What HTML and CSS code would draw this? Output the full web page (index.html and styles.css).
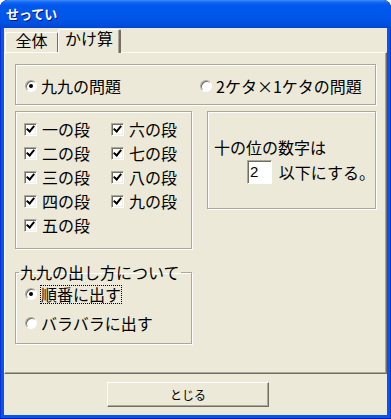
FILE: index.html
```html
<!DOCTYPE html>
<html lang="ja">
<head>
  <meta charset="UTF-8" />
  <title>せってい</title>
  <link rel="stylesheet" href="styles.css">
</head>
<body>
<div class="window">
  <div class="titlebar"><span class="title">せってい</span></div>
  <div class="client">
    <div class="tabs">
      <div class="tab">全体</div>
      <div class="tab active">かけ算</div>
    </div>

    <div class="panel">
      <div class="group mode">
        <div class="opt first"><span class="radio on"></span>九九の問題</div>
        <div class="opt"><span class="radio"></span>2ケタ×1ケタの問題</div>
      </div>

      <div class="row">
        <div class="group dans">
          <div class="chk"><span class="check"></span>一の段</div>
          <div class="chk"><span class="check"></span>二の段</div>
          <div class="chk"><span class="check"></span>三の段</div>
          <div class="chk"><span class="check"></span>四の段</div>
          <div class="chk"><span class="check"></span>五の段</div>
          <div class="chk"><span class="check"></span>六の段</div>
          <div class="chk"><span class="check"></span>七の段</div>
          <div class="chk"><span class="check"></span>八の段</div>
          <div class="chk"><span class="check"></span>九の段</div>
        </div>
        <div class="group tens">
          <div class="line">十の位の数字は</div>
          <div class="line2"><span class="field">2</span><span class="after">以下にする。</span></div>
        </div>
      </div>

      <fieldset class="order">
        <legend>九九の出し方について</legend>
        <div class="opt"><span class="radio on"></span><span class="focus">順番に出す</span></div>
        <div class="opt second"><span class="radio"></span>バラバラに出す</div>
      </fieldset>
    </div>

    <div class="footer"><button class="btn">とじる</button></div>
  </div>
</div>
</body>
</html>
```

FILE: styles.css
```css
body { margin: 0; background: #fff; font-family: "Noto Sans CJK JP", "Noto Sans", sans-serif; color: #000; }
.window { width: 391px; height: 419px; display: flex; flex-direction: column; background: #0855e6; border-radius: 8px 8px 0 0; box-shadow: inset 0 -1px #0019b8, inset 1px 0 #0831d9, inset -1px 0 #0831d9; overflow: hidden; }
.titlebar { height: 28px; flex: none; background: linear-gradient(#3d8ffc 0, #1a6af2 2px, #0058ee 5px, #0056e9 18px, #0050df 24px, #0046d2 28px); border-radius: 8px 8px 0 0; }
.title { display: block; padding-left: 6px; line-height: 28px; font-size: 13px; font-weight: bold; color: #fff; text-shadow: 1px 1px #0f1089; }
.client { flex: 1; margin: 0 4px 4px 4px; background: #ece9d8; display: flex; flex-direction: column; }

.tabs { height: 24px; flex: none; display: flex; align-items: flex-end; padding-left: 1px; }
.tab { box-sizing: border-box; width: 53px; height: 20px; border: 1px solid #fff; border-right-color: #716f64; border-bottom: none; border-radius: 2px 2px 0 0; font-size: 16px; line-height: 15px; text-align: center; }
.tab.active { width: 63px; height: 24px; margin-bottom: -1px; line-height: 16px; background: #ece9d8; border-right: 2px solid #716f64; box-shadow: inset -1px 0 #aca899; position: relative; z-index: 1; }

.panel { box-sizing: border-box; height: 322px; flex: none; border: 1px solid #fff; border-right-color: #716f64; border-bottom-color: #716f64; box-shadow: inset -1px -1px #aca899; padding: 11px 0 0 10px; font-size: 16px; }
.group { box-sizing: border-box; border: 1px solid #aca899; box-shadow: inset 1px 1px #fff, 1px 1px #fff; }

.opt { display: flex; align-items: center; height: 20px; line-height: 20px; white-space: nowrap; }
.radio { box-sizing: border-box; width: 12px; height: 12px; margin-right: 4px; border-radius: 50%; background: #fff; border: 1px solid; border-color: #aca899 #fff #fff #aca899; box-shadow: inset 1px 1px #716f64; position: relative; flex: none; }
.radio.on::after { content: ""; position: absolute; left: 3px; top: 3px; width: 4px; height: 4px; border-radius: 50%; background: #000; }

.mode { width: 361px; height: 41px; display: flex; align-items: center; padding: 2px 0 0 9px; }
.mode .first { width: 175px; }

.row { display: flex; gap: 15px; margin-top: 6px; }
.dans { width: 177px; height: 138px; padding: 7px 0 0 8px; display: grid; grid-template-columns: 87px auto; grid-template-rows: repeat(5, 20px); row-gap: 4px; grid-auto-flow: column; }
.chk { display: flex; align-items: center; line-height: 20px; white-space: nowrap; }
.check { box-sizing: border-box; width: 13px; height: 13px; margin-right: 5px; flex: none; background: #fff; border: 1px solid; border-color: #aca899 #fff #fff #aca899; box-shadow: inset 1px 1px #716f64, inset -1px -1px #f1efe2; position: relative; }
.check::after { content: ""; position: absolute; left: 3px; top: 0px; width: 3px; height: 6px; border-right: 2px solid #000; border-bottom: 2px solid #000; transform: rotate(40deg); }

.tens { width: 169px; height: 98px; padding: 25px 0 0 6px; }
.line { line-height: 20px; white-space: nowrap; }
.line2 { display: flex; align-items: center; margin-top: 3px; }
.field { box-sizing: border-box; width: 25px; height: 24px; margin-left: 33px; padding-left: 2px; background: #fff; border: 1px solid; border-color: #aca899 #fff #fff #aca899; box-shadow: inset 1px 1px #716f64; line-height: 21px; font-family: "Liberation Sans", sans-serif; font-size: 15px; }
.after { margin-left: 7px; white-space: nowrap; }

.order { box-sizing: border-box; width: 177px; margin: 14px 0 0 0; padding: 3px 0 10px 9px; border: 1px solid #aca899; box-shadow: inset 1px 1px #fff, 1px 1px #fff; min-width: 0; }
.order legend { padding: 0 1px; margin-left: -6px; line-height: 18px; font-size: 16px; }
.order .second { margin-top: 9px; }
.focus { border: 1px dotted #000; line-height: 17px; margin-left: -1px; }

.footer { flex: 1; padding: 7px 0 0 103px; }
.btn { box-sizing: border-box; width: 162px; height: 25px; padding: 0; background: #ece9d8; border: 1px solid; border-color: #fff #716f64 #716f64 #fff; box-shadow: inset -1px -1px #aca899; font-family: "Noto Sans CJK JP", sans-serif; font-size: 12px; color: #000; }
```
